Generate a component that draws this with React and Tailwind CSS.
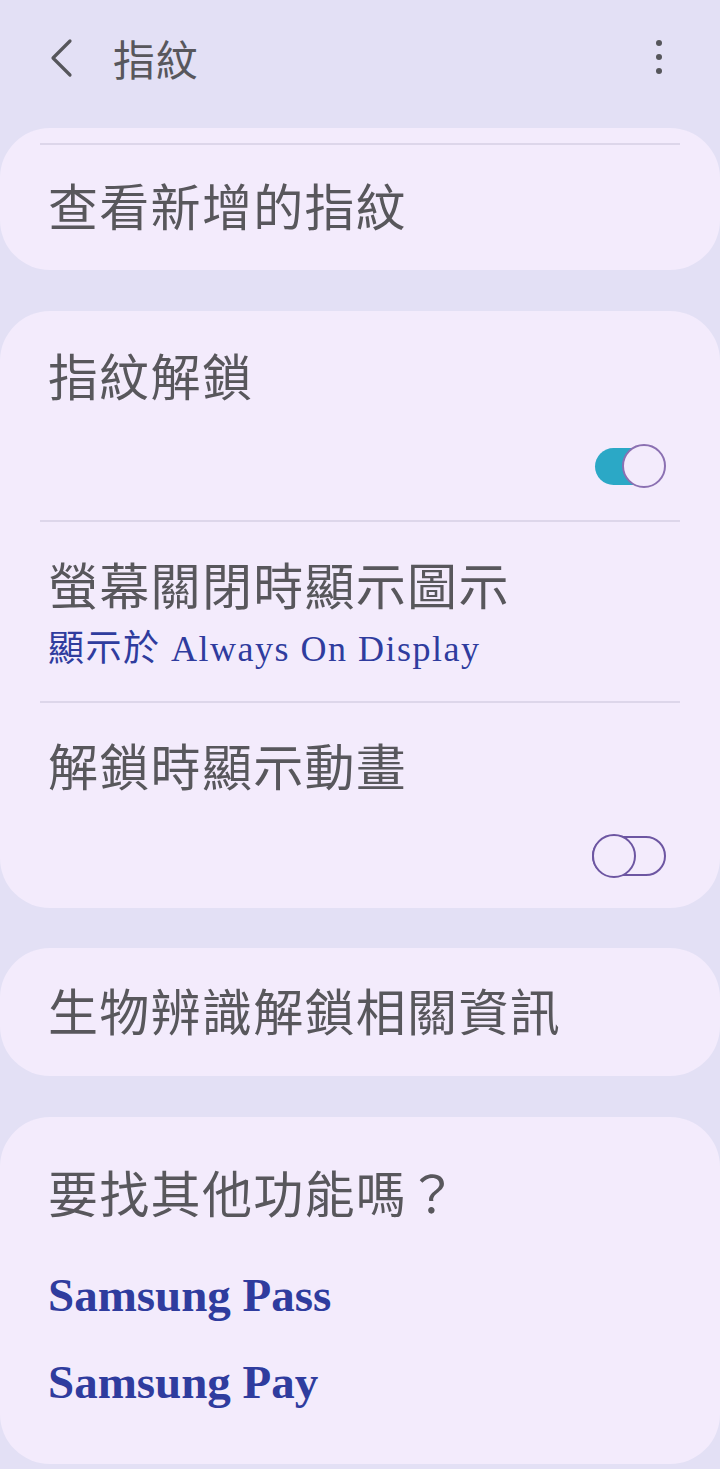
const CJK = { fontFamily: '"Noto Sans CJK TC", "Noto Sans", sans-serif' };

function Toggle({ on }) {
  if (on) {
    return (
      <div className="relative w-[72px] h-[44px]">
        <div className="absolute left-[1px] top-[4px] w-[60px] h-[37px] rounded-full bg-[#2ba8c6]" />
        <div className="absolute right-0 top-0 w-[44px] h-[44px] rounded-full bg-[#f3ebfc] border-2 border-[#8b70b2]" />
      </div>
    );
  }
  return (
    <div className="relative w-[74px] h-[44px]">
      <div className="absolute left-0 top-[2px] w-[74px] h-[40px] rounded-full border-2 border-[#6d56a2]" />
      <div className="absolute left-0 top-0 w-[44px] h-[44px] rounded-full bg-[#f3ebfc] border-2 border-[#6d56a2]" />
    </div>
  );
}

function Divider() {
  return <div className="mx-[40px] h-[2px] bg-[#ddd6ea]" />;
}

function Title({ children }) {
  return (
    <div className="text-[50px] leading-[60px] tracking-[1.3px] text-[#58575c]" style={CJK}>
      {children}
    </div>
  );
}

export default function App() {
  return (
    <div className="w-[720px] min-h-[1469px] bg-[#e3e0f5] pb-[4px]">
      {/* header */}
      <div className="h-[128px] flex items-start pt-[36px] pl-[48px] pr-[58px]">
        <svg width="28" height="40" viewBox="0 0 28 40" className="mt-[2px]">
          <path d="M22 3 L5 20 L22 37" fill="none" stroke="#56565b" strokeWidth="3.2" strokeLinecap="round" strokeLinejoin="round" />
        </svg>
        <div className="ml-[37px] text-[42px] leading-[44px] tracking-[1px] text-[#58575c]" style={CJK}>
          指紋
        </div>
        <div className="ml-auto flex flex-col items-center gap-[8px] pt-[4px]">
          <span className="w-[6px] h-[6px] rounded-full bg-[#56565b]" />
          <span className="w-[6px] h-[6px] rounded-full bg-[#56565b]" />
          <span className="w-[6px] h-[6px] rounded-full bg-[#56565b]" />
        </div>
      </div>

      {/* card 1 */}
      <div className="bg-[#f3ebfc] rounded-[50px] pt-[15px] pb-[36px]">
        <Divider />
        <div className="pl-[48px] pt-[29px]">
          <Title>查看新增的指紋</Title>
        </div>
      </div>

      {/* card 2 */}
      <div className="mt-[41px] bg-[#f3ebfc] rounded-[50px]">
        <div className="pl-[48px] pr-[54px] pt-[33px] pb-[32px]">
          <Title>指紋解鎖</Title>
          <div className="mt-[40px] flex justify-end">
            <Toggle on />
          </div>
        </div>
        <Divider />
        <div className="pl-[48px] pt-[31px] pb-[30px]">
          <Title>螢幕關閉時顯示圖示</Title>
          <div
            className="mt-[14px] text-[36px] leading-[44px] tracking-[1.5px] text-[#2f3c9e]"
            style={{ fontFamily: '"Liberation Serif", "Noto Sans CJK TC", serif' }}
          >
            顯示於 Always On Display
          </div>
        </div>
        <Divider />
        <div className="pl-[48px] pr-[54px] pt-[31px] pb-[30px]">
          <Title>解鎖時顯示動畫</Title>
          <div className="mt-[40px] flex justify-end">
            <Toggle on={false} />
          </div>
        </div>
      </div>

      {/* card 3 */}
      <div className="mt-[40px] bg-[#f3ebfc] rounded-[50px] pl-[48px] pt-[31px] pb-[37px]">
        <Title>生物辨識解鎖相關資訊</Title>
      </div>

      {/* card 4 */}
      <div className="mt-[41px] bg-[#f3ebfc] rounded-[50px] pl-[48px] pt-[44px] pb-[52px]">
        <Title>要找其他功能嗎？</Title>
        <div
          className="mt-[44px] flex flex-col gap-[27px] text-[47px] leading-[60px] font-bold text-[#2f3c9e]"
          style={{ fontFamily: '"Liberation Serif", serif' }}
        >
          <div>Samsung Pass</div>
          <div>Samsung Pay</div>
        </div>
      </div>
    </div>
  );
}
